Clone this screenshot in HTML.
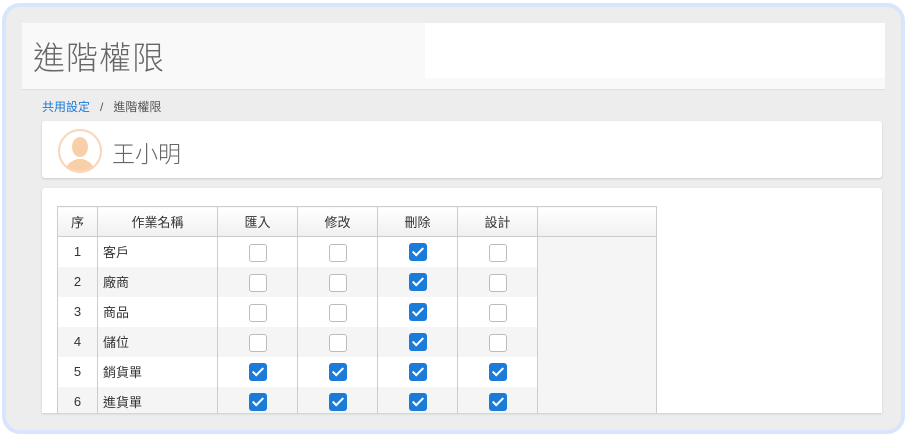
<!DOCTYPE html>
<html><head><meta charset="utf-8"><style>
*{margin:0;padding:0;box-sizing:border-box}
body{width:907px;height:437px;background:#fff;font-family:"Liberation Sans","Noto Sans CJK TC",sans-serif;position:relative;overflow:hidden}
.frame{position:absolute;left:2px;top:3px;width:903px;height:431px;border:4px solid #d9e5fc;border-radius:18px;background:#ededed;overflow:hidden}
.hdr{position:absolute;left:22px;top:23px;width:863px;height:67px;background:#f9f9f9;border-bottom:1px solid #e0e0e0}
.hdr .w{position:absolute;left:403px;top:0;width:460px;height:55px;background:#fff}
.hdr h1{position:absolute;left:11px;top:10px;font-size:32px;font-weight:300;color:#666;letter-spacing:1px;font-family:"Noto Sans CJK TC",sans-serif}
.bc{position:absolute;left:42px;top:98px;font-size:12px;color:#555}
.bc a{color:#1a7bd9}
.card{position:absolute;left:42px;width:840px;background:#fff;border-radius:3px;box-shadow:0 1px 2px rgba(0,0,0,.15);overflow:hidden}
.av{position:absolute;left:16px;top:8px;width:44px;height:44px;border-radius:50%;border:2px solid #f8d6b6;overflow:hidden;background:#fff}
.name{position:absolute;left:70px;top:14px;font-size:23px;color:#666;font-family:"Noto Sans CJK TC",sans-serif;font-weight:300}
table{position:absolute;left:15px;top:18px;border-collapse:collapse;font-size:13px;color:#333;table-layout:fixed;width:600px}
th{height:30px;border:1px solid #ccc;background:linear-gradient(#fff,#f0f0f0);font-weight:normal}
td{height:30px;border-left:1px solid #ccc;border-right:1px solid #ccc;text-align:center}
td.n{text-align:left;padding-left:5px}
tr.a td{background:#f5f5f5}
td.blank{background:#f5f5f5;vertical-align:top}
.cb{display:inline-block;width:18px;height:18px;border:1px solid #bbb;border-radius:3px;background:#fff;vertical-align:middle;margin-top:3px}
.ck{display:inline-block;width:18px;height:18px;border-radius:3px;background:#1a7bd9;vertical-align:middle;position:relative}
.ck::after{content:"";position:absolute;left:6px;top:2px;width:4px;height:9px;border:solid #fff;border-width:0 2px 2px 0;transform:rotate(45deg)}
</style></head><body>
<div class="frame"></div>
<div class="hdr"><div class="w"></div><h1>進階權限</h1></div>
<div class="bc"><a>共用設定</a>&nbsp;&nbsp; / &nbsp;&nbsp;進階權限</div>
<div class="card" style="top:121px;height:57px">
<div class="av"><svg width="44" height="44" viewBox="0 0 44 44"><ellipse cx="20" cy="16" rx="8" ry="10" fill="#f9cfa9"/><path d="M4 44 C6 32 12 30 17 28 L23 28 C28 30 34 32 36 44Z" fill="#f9cfa9"/></svg></div>
<div class="name">王小明</div></div>
<div class="card" style="top:188px;height:225px;border-radius:3px 3px 0 0">
<table>
<colgroup><col style="width:40px"><col style="width:120px"><col style="width:80px"><col style="width:80px"><col style="width:80px"><col style="width:80px"><col style="width:119px"></colgroup>
<tr><th>序</th><th>作業名稱</th><th>匯入</th><th>修改</th><th>刪除</th><th>設計</th><th></th></tr>
<tr><td>1</td><td class="n">客戶</td><td><span class="cb"></span></td><td><span class="cb"></span></td><td><span class="ck"></span></td><td><span class="cb"></span></td><td class="blank" rowspan="6"></td></tr>
<tr class="a"><td>2</td><td class="n">廠商</td><td><span class="cb"></span></td><td><span class="cb"></span></td><td><span class="ck"></span></td><td><span class="cb"></span></td></tr>
<tr><td>3</td><td class="n">商品</td><td><span class="cb"></span></td><td><span class="cb"></span></td><td><span class="ck"></span></td><td><span class="cb"></span></td></tr>
<tr class="a"><td>4</td><td class="n">儲位</td><td><span class="cb"></span></td><td><span class="cb"></span></td><td><span class="ck"></span></td><td><span class="cb"></span></td></tr>
<tr><td>5</td><td class="n">銷貨單</td><td><span class="ck"></span></td><td><span class="ck"></span></td><td><span class="ck"></span></td><td><span class="ck"></span></td></tr>
<tr class="a"><td>6</td><td class="n">進貨單</td><td><span class="ck"></span></td><td><span class="ck"></span></td><td><span class="ck"></span></td><td><span class="ck"></span></td></tr>
</table></div>
</body></html>
